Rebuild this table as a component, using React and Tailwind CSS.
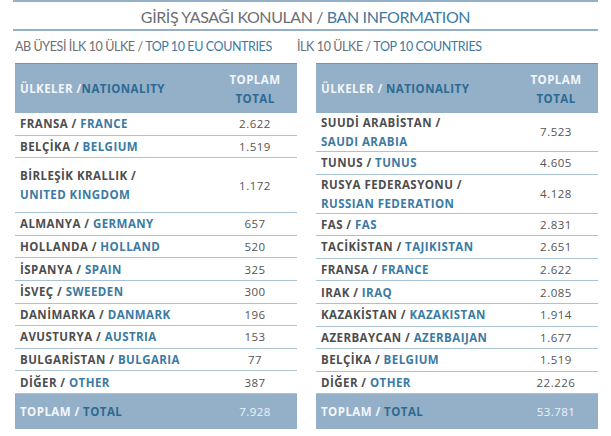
const left = [
  { tr: 'FRANSA', en: 'FRANCE', n: '2.622' },
  { tr: 'BELÇİKA', en: 'BELGIUM', n: '1.519' },
  { tr: 'BİRLEŞİK KRALLIK', en: 'UNITED KINGDOM', n: '1.172', wrap: true, tall: true },
  { tr: 'ALMANYA', en: 'GERMANY', n: '657' },
  { tr: 'HOLLANDA', en: 'HOLLAND', n: '520' },
  { tr: 'İSPANYA', en: 'SPAIN', n: '325' },
  { tr: 'İSVEÇ', en: 'SWEEDEN', n: '300' },
  { tr: 'DANİMARKA', en: 'DANMARK', n: '196' },
  { tr: 'AVUSTURYA', en: 'AUSTRIA', n: '153' },
  { tr: 'BULGARİSTAN', en: 'BULGARIA', n: '77' },
  { tr: 'DİĞER', en: 'OTHER', n: '387' },
];

const right = [
  { tr: 'SUUDİ ARABİSTAN', en: 'SAUDI ARABIA', n: '7.523', wrap: true },
  { tr: 'TUNUS', en: 'TUNUS', n: '4.605' },
  { tr: 'RUSYA FEDERASYONU', en: 'RUSSIAN FEDERATION', n: '4.128', wrap: true },
  { tr: 'FAS', en: 'FAS', n: '2.831' },
  { tr: 'TACİKİSTAN', en: 'TAJIKISTAN', n: '2.651' },
  { tr: 'FRANSA', en: 'FRANCE', n: '2.622' },
  { tr: 'IRAK', en: 'IRAQ', n: '2.085' },
  { tr: 'KAZAKİSTAN', en: 'KAZAKISTAN', n: '1.914' },
  { tr: 'AZERBAYCAN', en: 'AZERBAIJAN', n: '1.677' },
  { tr: 'BELÇİKA', en: 'BELGIUM', n: '1.519' },
  { tr: 'DİĞER', en: 'OTHER', n: '22.226' },
];

const Row = ({ row }) => {
  const h = row.tall ? 'h-[55px]' : row.wrap ? 'h-[39px]' : 'h-[22.6px]';
  return (
    <div className={`grid grid-cols-[1fr_84px] items-center border-b border-[#a9c2d5] ${h}`}>
      {row.wrap ? (
        <div className="pl-[5px] leading-[19px]">
          <div className="text-[#4d4d4f]">{row.tr} /</div>
          <div className="text-[#3b7aa3]">{row.en}</div>
        </div>
      ) : (
        <div className="pl-[5px]">
          <span className="text-[#4d4d4f]">{row.tr} / </span>
          <span className="text-[#3b7aa3]">{row.en}</span>
        </div>
      )}
      <div className="text-center font-normal text-[#555] tracking-[0.5px]">{row.n}</div>
    </div>
  );
};

const Table = ({ rows, total, slash }) => (
  <div className="w-[282px] text-[11.5px] font-bold tracking-[0.45px]">
    <div className="grid grid-cols-[1fr_84px] items-center h-[50px] bg-[#93b0c8] border-t border-[#7f919f]">
      <div className="pl-[5px]">
        <span className="text-[#f3f6f9]">ÜLKELER {slash}</span>
        <span className="text-[#2d6a92]">NATIONALITY</span>
      </div>
      <div className="text-center leading-[19px]">
        <div className="text-[#f3f6f9]">TOPLAM</div>
        <div className="text-[#2d6a92]">TOTAL</div>
      </div>
    </div>
    {rows.map((r, i) => (
      <Row key={i} row={r} />
    ))}
    <div className="grid grid-cols-[1fr_84px] items-center h-[35px] bg-[#93b0c8]">
      <div className="pl-[5px]">
        <span className="text-[#f3f6f9]">TOPLAM / </span>
        <span className="text-[#2d6a92]">TOTAL</span>
      </div>
      <div className="text-center font-normal text-[#eef3f7]">{total}</div>
    </div>
  </div>
);

export default function App() {
  return (
    <div className="w-[611px] h-[436px] bg-white overflow-hidden font-['Open_Sans',sans-serif]">
      <div className="ml-[13px] w-[585px] border-t-2 border-b-2 border-[#93b0c8] h-[31px] pt-[3px] flex items-center justify-center whitespace-nowrap font-['Lato',sans-serif] text-[16px] tracking-[-0.4px]">
        <span className="text-[#6d6e71]">GİRİŞ YASAĞI KONULAN /&nbsp;</span>
        <span className="text-[#3b7aa3]">BAN INFORMATION</span>
      </div>
      <div className="flex pl-[15px] h-[32px] items-center whitespace-nowrap font-['Lato',sans-serif] text-[12.5px] tracking-[-0.4px]">
        <div className="w-[282px]">
          <span className="text-[#6d6e71]">AB ÜYESİ İLK 10 ÜLKE / </span>
          <span className="text-[#3b7aa3]">TOP 10 EU COUNTRIES</span>
        </div>
        <div>
          <span className="text-[#6d6e71]">İLK 10 ÜLKE / </span>
          <span className="text-[#3b7aa3]">TOP 10 COUNTRIES</span>
        </div>
      </div>
      <div className="flex gap-[19px] pl-[15px]">
        <Table rows={left} total="7.928" slash="/" />
        <Table rows={right} total="53.781" slash="/ " />
      </div>
    </div>
  );
}
